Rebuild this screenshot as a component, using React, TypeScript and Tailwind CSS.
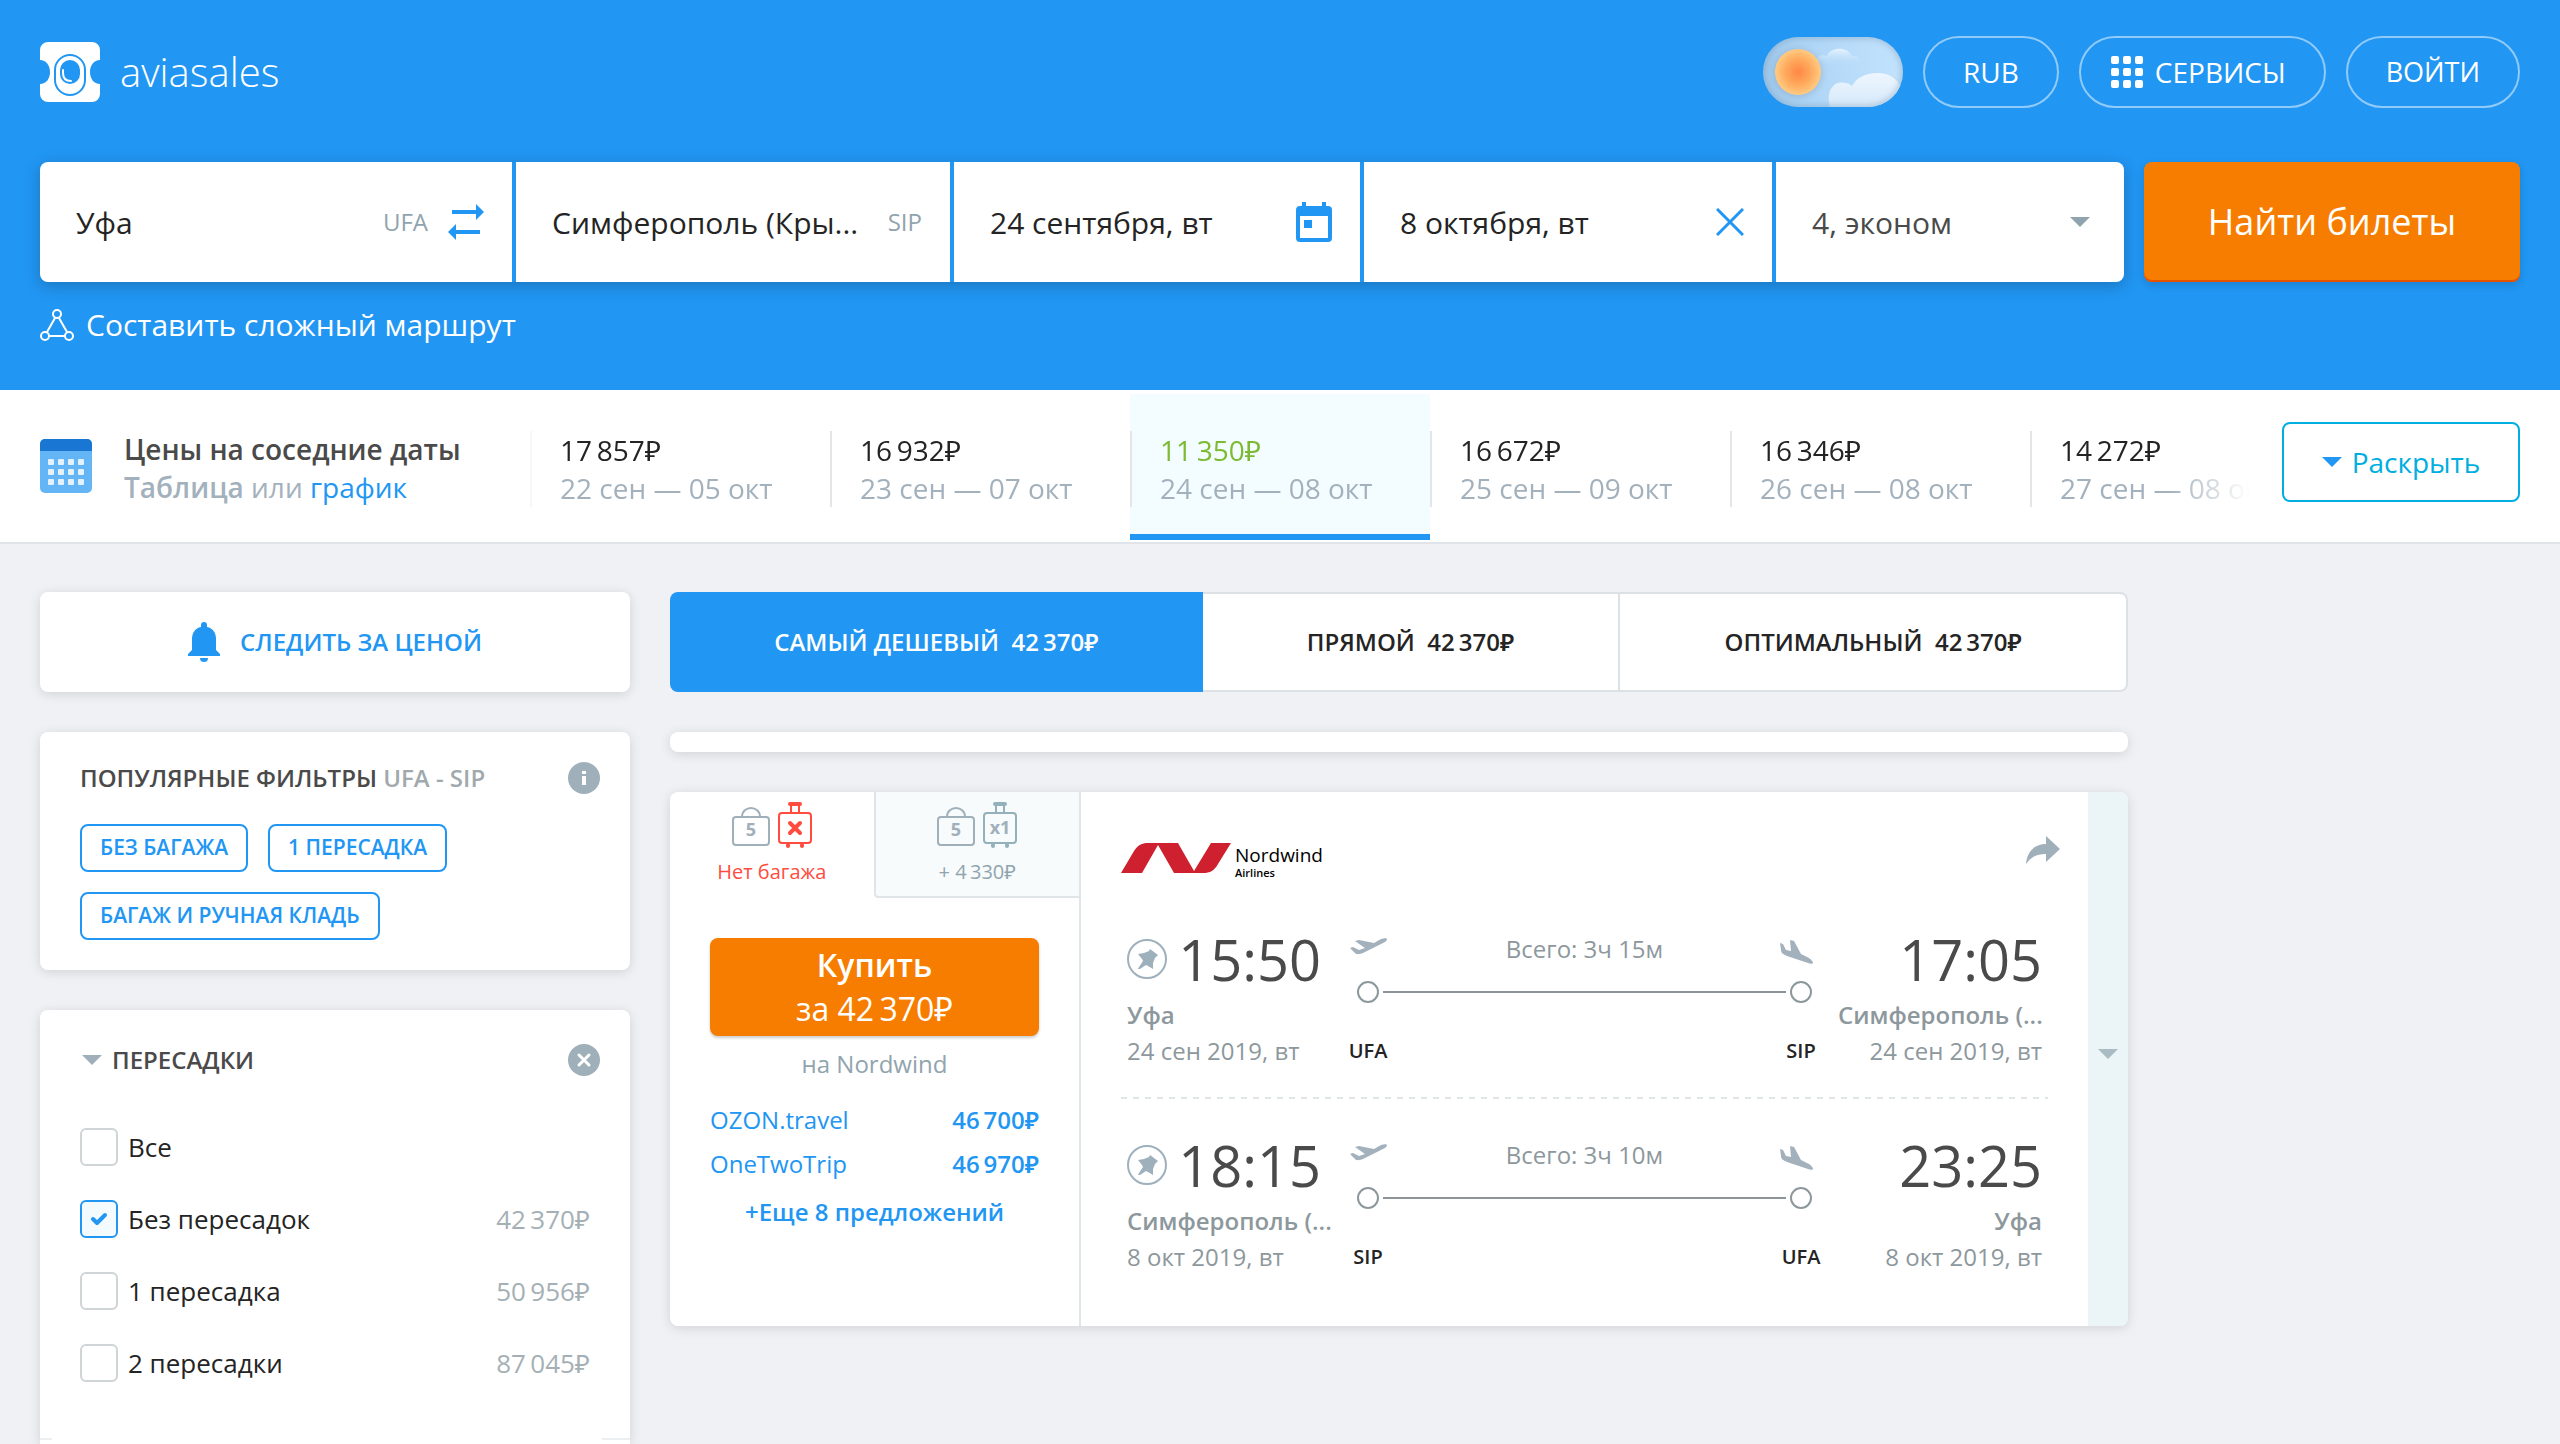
import React from "react";

type Stop = { label: string; price?: string };
type LegData = {
  depart: string;
  arrive: string;
  from: string;
  to: string;
  fromCode: string;
  toCode: string;
  date: string;
  duration: string;
};

const prices = [
  { price: "17\u2009857₽", dates: "22 сен — 05 окт" },
  { price: "16\u2009932₽", dates: "23 сен — 07 окт" },
  { price: "11\u2009350₽", dates: "24 сен — 08 окт", active: true },
  { price: "16\u2009672₽", dates: "25 сен — 09 окт" },
  { price: "16\u2009346₽", dates: "26 сен — 08 окт" },
  { price: "14\u2009272₽", dates: "27 сен — 08 окт" },
];

const stops: Stop[] = [
  { label: "Все" },
  { label: "Без пересадок", price: "42\u2009370₽" },
  { label: "1 пересадка", price: "50\u2009956₽" },
  { label: "2 пересадки", price: "87\u2009045₽" },
];

const legs: LegData[] = [
  {
    depart: "15:50",
    arrive: "17:05",
    from: "Уфа",
    to: "Симферополь (...",
    fromCode: "UFA",
    toCode: "SIP",
    date: "24 сен 2019, вт",
    duration: "Всего: 3ч 15м",
  },
  {
    depart: "18:15",
    arrive: "23:25",
    from: "Симферополь (...",
    to: "Уфа",
    fromCode: "SIP",
    toCode: "UFA",
    date: "8 окт 2019, вт",
    duration: "Всего: 3ч 10м",
  },
];

const card = "bg-white rounded-lg shadow-[0_2px_12px_rgba(0,0,0,0.13)]";

const Triangle: React.FC<{ className?: string }> = ({ className }) => (
  <svg className={className} width="20" height="10" viewBox="0 0 20 10" fill="currentColor">
    <path d="M0 0h20L10 10z" />
  </svg>
);

const Logo = () => (
  <svg width="60" height="60" viewBox="0 0 60 60">
    <path
      d="M8 0h44a8 8 0 0 1 8 8v10c-6 0-10 5-10 12s4 12 10 12v10a8 8 0 0 1-8 8H8a8 8 0 0 1-8-8V42c6 0 10-5 10-12S6 18 0 18V8a8 8 0 0 1 8-8z"
      fill="#fff"
    />
    <rect x="15" y="13" width="30" height="40" rx="15" fill="none" stroke="#2196f3" strokeWidth="2" />
    <rect x="20" y="18" width="20" height="24" rx="10" fill="#2196f3" />
    <path d="M23 28v3c0 5 3 8 8 8" fill="none" stroke="#fff" strokeWidth="2" strokeLinecap="round" />
  </svg>
);

const DayToggle = () => (
  <svg width="140" height="70" viewBox="0 0 140 70">
    <defs>
      <radialGradient id="sun">
        <stop offset="0" stopColor="#ff8744" />
        <stop offset="0.55" stopColor="#ffa95c" />
        <stop offset="1" stopColor="#ffcb82" />
      </radialGradient>
      <linearGradient id="sky" x1="0" y1="0" x2="1" y2="0">
        <stop offset="0" stopColor="#9fc9ec" />
        <stop offset="0.35" stopColor="#b0d6f6" />
        <stop offset="1" stopColor="#c3e3fd" />
      </linearGradient>
      <linearGradient id="cloud" x1="0" y1="0" x2="0" y2="1">
        <stop offset="0" stopColor="#eef6fe" />
        <stop offset="1" stopColor="#d2e7fa" />
      </linearGradient>
      <linearGradient id="haze" x1="0" y1="0" x2="0" y2="1">
        <stop offset="0" stopColor="#e6f3fe" />
        <stop offset="1" stopColor="#bbddf9" stopOpacity="0" />
      </linearGradient>
      <clipPath id="pill">
        <rect width="140" height="70" rx="35" />
      </clipPath>
      <filter id="soft">
        <feGaussianBlur stdDeviation="3" />
      </filter>
    </defs>
    <g clipPath="url(#pill)">
      <rect width="140" height="70" fill="url(#sky)" />
      <path d="M51 28c0-6 6-12 13-9 2-8 20-11 25 0 6-2 10 5 9 10H51z" fill="url(#haze)" />
      <path d="M67 70c-4-12 1-27 15-24 3 0 5 1 7 3 4-8 14-13 25-13 14 0 22 7 25 18v20H67z" fill="url(#cloud)" />
      <rect x="-1" y="-1" width="142" height="72" rx="36" fill="none" stroke="#6f8fac" strokeOpacity="0.6" strokeWidth="4" filter="url(#soft)" />
      <circle cx="35" cy="36" r="24" fill="#7b8fa5" opacity="0.35" filter="url(#soft)" />
      <circle cx="35" cy="35" r="23" fill="url(#sun)" />
    </g>
  </svg>
);

const SwapIcon = () => (
  <svg width="36" height="36" viewBox="0 0 36 36" fill="#2196f3">
    <path d="M4 6h24V0l8 8-8 8v-6H4zM32 26H8v-6l-8 8 8 8v-6h24z" />
  </svg>
);

const DateIcon = () => (
  <svg width="36" height="40" viewBox="0 0 36 40" fill="#2196f3">
    <path fillRule="evenodd" d="M6 0h4v4h16V0h4v4h2a4 4 0 0 1 4 4v28a4 4 0 0 1-4 4H4a4 4 0 0 1-4-4V8a4 4 0 0 1 4-4h2zM4 14v22h28V14z" />
    <path d="M8 18h8v8H8z" />
  </svg>
);

const CloseIcon = () => (
  <svg width="28" height="28" viewBox="0 0 28 28" stroke="#2196f3" strokeWidth="3">
    <path d="M1 1l26 26M27 1L1 27" />
  </svg>
);

const RouteIcon = () => (
  <svg width="34" height="34" viewBox="0 0 34 34" fill="none" stroke="#fff" strokeWidth="2">
    <circle cx="17" cy="6" r="4" />
    <circle cx="5" cy="28" r="4" />
    <circle cx="29" cy="28" r="4" />
    <path d="M15 10L7 24M19 10l8 14M9 28h16" />
  </svg>
);

const GridIcon = () => (
  <svg width="32" height="32" viewBox="0 0 32 32" fill="#fff">
    {[0, 12, 24].map((y) =>
      [0, 12, 24].map((x) => <rect key={`${x}-${y}`} x={x} y={y} width="8" height="8" rx="2" />)
    )}
  </svg>
);

const CalendarIcon = () => (
  <svg width="52" height="54" viewBox="0 0 52 54">
    <rect width="52" height="54" rx="5" fill="#64b5f6" />
    <path d="M5 0h42a5 5 0 0 1 5 5v7H0V5a5 5 0 0 1 5-5z" fill="#1976d2" />
    {[20, 30, 40].map((y) =>
      [8, 18, 28, 38].map((x) => (
        <rect key={`${x}-${y}`} x={x} y={y} width="6" height="6" rx="1" fill="#e3f2fd" />
      ))
    )}
  </svg>
);

const BellIcon = () => (
  <svg width="32" height="40" viewBox="0 0 32 40" fill="#2196f3">
    <path d="M16 0c2 0 3 1 3 3v2c6 1 9 6 9 12v11l4 4v2H0v-2l4-4V17C4 11 7 6 13 5V3c0-2 1-3 3-3zM12 36h8c0 3-2 4-4 4s-4-1-4-4z" />
  </svg>
);

const BagIcon = () => (
  <svg width="38" height="46" viewBox="0 0 38 46" fill="none" stroke="#9fb0ba" strokeWidth="2">
    <rect x="1" y="15" width="36" height="28" rx="3" />
    <path d="M10 15c0-12 18-12 18 0" />
    <text x="19" y="34" textAnchor="middle" fill="#9fb0ba" stroke="none" fontSize="18" fontWeight="700">
      5
    </text>
  </svg>
);

const SuitcaseIcon: React.FC<{ none?: boolean }> = ({ none }) => (
  <svg
    className={none ? "text-[#ff4c3f]" : "text-[#94b0ba]"}
    width="34"
    height="46"
    viewBox="0 0 34 46"
    fill="none"
    stroke="currentColor"
    strokeWidth="2"
  >
    <rect x="1" y="11" width="32" height="30" rx="3" />
    <path d="M13 11V3M21 11V3" />
    <path d="M12 2h10M10 43v1M24 43v1" strokeWidth="4" strokeLinecap="round" />
    {none ? (
      <path d="M12 21l10 10M22 21L12 31" strokeWidth="4" strokeLinecap="round" />
    ) : (
      <text x="17" y="32" textAnchor="middle" fill="#9fb0ba" stroke="none" fontSize="18" fontWeight="700">
        x1
      </text>
    )}
  </svg>
);

const NordwindMark = () => (
  <svg width="110" height="30" viewBox="0 0 110 30" fill="#ce202e">
    <path d="M0 30L13 8C17 2 21 0 27 0h30l16 28L90 0h20L97 21c-4 7-8 9-15 9H53L37 2 21 30z" />
  </svg>
);

const PinIcon = () => (
  <svg width="40" height="40" viewBox="0 0 40 40">
    <circle cx="20" cy="20" r="19" fill="none" stroke="#9fb0bd" strokeWidth="2" />
    <path d="M23 10l8 6-2 2-1 1-2 5 0 6-5-3-2-1-6 4-2 0 1-2 4-6-1-2-4-5 6-1 5-2z" fill="#9fb0bd" />
  </svg>
);

const TakeoffIcon = () => (
  <svg width="44" height="32" viewBox="0 0 44 32" fill="#a3b1bd">
    <path d="M4 15l3-1 6 3 6-2-10-7 4-1 15 3 7-4c3-1 6-1 6 0s-1 3-4 4L17 20c-3 1-6 2-8 0z" />
  </svg>
);

const LandingIcon = () => (
  <svg width="44" height="32" viewBox="0 0 44 32" fill="#a3b1bd">
    <path d="M1 10l3 1 3 6 5 1-1-11 4 1 7 13 8 4c3 2 4 4 4 5s-3 1-5 0L8 23c-4-2-6-3-6-6z" />
  </svg>
);

const ShareIcon = () => (
  <svg width="34" height="28" viewBox="0 0 34 28" fill="#a0b0bb">
    <path d="M20 0l14 13-14 13v-8C10 18 5 21 0 28 1 16 8 8 20 8z" />
  </svg>
);

const Header = () => (
  <header className="bg-[#2196f3] px-10 pt-9 pb-11 text-white">
    <div className="flex items-center gap-5">
      <a href="#" className="mr-auto flex items-center gap-5 text-[40px] leading-[60px] font-light">
        <Logo />
        aviasales
      </a>
      <button aria-label="Тема">
        <DayToggle />
      </button>
      <button className="h-[72px] rounded-full border-2 border-white/50 px-[38px] text-[28px]">RUB</button>
      <button className="flex h-[72px] items-center gap-3 rounded-full border-2 border-white/50 pr-[38px] pl-[30px] text-[28px]">
        <GridIcon />
        СЕРВИСЫ
      </button>
      <button className="h-[72px] rounded-full border-2 border-white/50 px-[38px] text-[27px]">ВОЙТИ</button>
    </div>

    <form className="mt-[54px] flex gap-5" onSubmit={(e) => e.preventDefault()}>
      <div className="grid h-[120px] flex-1 grid-cols-[472fr_434fr_406fr_408fr_348fr] gap-1 overflow-hidden rounded-lg text-[30px] text-[#242424] shadow-[0_4px_16px_rgba(0,0,0,0.22)]">
        <div className="flex items-center bg-white pr-7 pl-9">
          <input aria-label="Город вылета" defaultValue="Уфа" className="w-0 min-w-0 flex-1 outline-none" />
          <span className="mr-5 text-2xl text-[#90a4ae]">UFA</span>
          <button type="button" aria-label="Поменять местами">
            <SwapIcon />
          </button>
        </div>
        <div className="flex items-center bg-white pr-7 pl-9">
          <input
            aria-label="Город прибытия"
            defaultValue="Симферополь (Кры..."
            className="w-0 min-w-0 flex-1 outline-none"
          />
          <span className="text-2xl text-[#90a4ae]">SIP</span>
        </div>
        <div className="flex items-center bg-white pr-7 pl-9">
          <input aria-label="Туда" defaultValue="24 сентября, вт" className="w-0 min-w-0 flex-1 outline-none" />
          <DateIcon />
        </div>
        <div className="flex items-center bg-white pr-7 pl-9">
          <input aria-label="Обратно" defaultValue="8 октября, вт" className="w-0 min-w-0 flex-1 outline-none" />
          <button type="button" aria-label="Очистить">
            <CloseIcon />
          </button>
        </div>
        <div className="flex items-center bg-white pr-[34px] pl-9 text-[#4a4a4a]">
          <select aria-label="Пассажиры" className="w-0 min-w-0 flex-1 appearance-none outline-none">
            <option>4, эконом</option>
          </select>
          <Triangle className="text-[#90a4ae]" />
        </div>
      </div>
      <button className="w-[376px] rounded-lg bg-[#f77d00] text-4xl font-medium shadow-[inset_0_-2px_0_#e65100,0_3px_8px_rgba(0,0,0,0.15)]">
        Найти билеты
      </button>
    </form>

    <a href="#" className="mt-[22px] flex w-fit items-center gap-3 text-[30px] leading-[42px] font-medium">
      <RouteIcon />
      Составить сложный маршрут
    </a>
  </header>
);

const PriceStrip = () => (
  <section className="flex items-center border-b-2 border-[#e0e4e8] bg-white px-10">
    <CalendarIcon />
    <div className="ml-8 w-[391px] pt-1 text-[28px] leading-[38px]">
      <p className="font-semibold text-[#4a4a4a]">Цены на соседние даты</p>
      <p className="text-[#a3b1bd]">
        <b className="font-semibold">Таблица</b> или{" "}
        <a href="#" className="text-[#2196f3]">
          график
        </a>
      </p>
    </div>
    <div className="flex h-[152px] min-w-0 flex-1 overflow-hidden pt-1 pb-0.5 pl-[15px] [mask-image:linear-gradient(to_right,transparent,black_50px,black_calc(100%-80px),transparent)]">
      {prices.map((p) => (
        <button
          key={p.dates}
          className={
            p.active
              ? "w-[300px] shrink-0 border-b-6 border-[#2196f3] bg-[#f3fdff] pt-2.5 text-left"
              : "w-[300px] shrink-0 border-b-6 border-transparent pt-2.5 text-left"
          }
        >
          <div className="border-l-2 border-[#e2e6e8] pl-7 text-[28px] leading-[38px]">
            <p className={p.active ? "text-[#7cba32]" : "text-[#242424]"}>{p.price}</p>
            <p className="whitespace-nowrap text-[#a3b1bd]">{p.dates}</p>
          </div>
        </button>
      ))}
    </div>
    <button className="mb-2 ml-8 flex h-20 w-[238px] items-center justify-center gap-2.5 rounded-lg border-2 border-[#00aee0] text-[28px] text-[#00aee0]">
      <Triangle className="text-[#2196f3]" />
      Раскрыть
    </button>
  </section>
);

const Sidebar = () => (
  <aside className="flex w-[590px] shrink-0 flex-col gap-10">
    <button className={`${card} flex h-[100px] items-center justify-center gap-5 text-2xl font-semibold text-[#2196f3]`}>
      <BellIcon />
      СЛЕДИТЬ ЗА ЦЕНОЙ
    </button>

    <section className={`${card} px-10 pt-[30px] pb-[30px]`}>
      <div className="-mr-2.5 flex items-center justify-between">
        <h2 className="text-2xl font-semibold text-[#4a4a4a]">
          ПОПУЛЯРНЫЕ ФИЛЬТРЫ <span className="text-[#9fa9ae]">UFA - SIP</span>
        </h2>
        <button aria-label="Справка">
          <svg width="32" height="32" viewBox="0 0 32 32">
            <circle cx="16" cy="16" r="16" fill="#a0b0bb" />
            <path d="M14 9h4v3h-4zM14 14h4v9h-4z" fill="#fff" />
          </svg>
        </button>
      </div>
      <div className="mt-[30px] flex flex-wrap gap-5 text-[21px] font-semibold text-[#2196f3]">
        <button className="h-12 rounded-lg border-2 border-[#2196f3] px-[18px]">БЕЗ БАГАЖА</button>
        <button className="h-12 rounded-lg border-2 border-[#2196f3] px-[18px]">1 ПЕРЕСАДКА</button>
        <button className="h-12 rounded-lg border-2 border-[#2196f3] px-[18px]">БАГАЖ И РУЧНАЯ КЛАДЬ</button>
      </div>
    </section>

    <section className="flex flex-1 flex-col rounded-t-lg bg-white pt-[34px] shadow-[0_2px_12px_rgba(0,0,0,0.13)]">
      <div className="flex items-center pr-[30px] pl-[42px]">
        <button className="flex items-center gap-2.5 text-2xl font-semibold text-[#4a4a4a]">
          <Triangle className="text-[#a0b0bb]" />
          ПЕРЕСАДКИ
        </button>
        <button aria-label="Сбросить" className="ml-auto">
          <svg width="32" height="32" viewBox="0 0 32 32">
            <circle cx="16" cy="16" r="16" fill="#a0b0bb" />
            <path d="M11 11l10 10M21 11L11 21" stroke="#fff" strokeWidth="3" strokeLinecap="round" />
          </svg>
        </button>
      </div>
      <div className="mt-[52px] flex flex-col gap-[34px] px-10 text-[26px] leading-[38px]">
        {stops.map((s, i) => (
          <label key={s.label} className="flex items-center gap-2.5 text-[#242424]">
            <span className="grid">
              <input
                type="checkbox"
                defaultChecked={i === 1}
                className="peer col-start-1 row-start-1 size-[38px] appearance-none rounded-md border-2 border-[#cfd4d6] checked:border-[#2196f3] checked:bg-[#f3fbff]"
              />
              <svg
                className="pointer-events-none invisible col-start-1 row-start-1 peer-checked:visible"
                width="38"
                height="38"
                viewBox="0 0 38 38"
              >
                <path d="M13 19l4 4 8-8" fill="none" stroke="#2196f3" strokeWidth="4" strokeLinecap="round" strokeLinejoin="round" />
              </svg>
            </span>
            {s.label}
            <span className="ml-auto text-[#a5b0b5]">{s.price}</span>
          </label>
        ))}
      </div>
      <div className="mt-14 flex justify-between pb-1">
        <span className="h-0.5 w-3 bg-[#eceff1]" />
        <span className="h-0.5 w-7 bg-[#eceff1]" />
      </div>
    </section>
  </aside>
);

const Leg: React.FC<{ leg: LegData }> = ({ leg }) => (
  <div className="flex gap-[15px] px-1.5 text-2xl leading-9 text-[#8d989d]">
    <div className="w-[204px] shrink-0 whitespace-nowrap">
      <div className="flex items-center justify-between text-[56px] leading-[60px] text-[#4a4a4a]">
        <button aria-label="Закрепить">
          <PinIcon />
        </button>
        <span className="pr-2.5">{leg.depart}</span>
      </div>
      <p className="mt-2 font-semibold">{leg.from}</p>
      <p>{leg.date}</p>
    </div>
    <div className="flex flex-1 flex-col pt-1">
      <div className="flex justify-between text-2xl leading-8">
        <TakeoffIcon />
        {leg.duration}
        <LandingIcon />
      </div>
      <div className="mt-4 flex items-center gap-1 px-[11px]">
        <span className="size-[22px] rounded-full border-2 border-[#8d989d]" />
        <span className="h-0.5 flex-1 bg-[#8d9499]" />
        <span className="size-[22px] rounded-full border-2 border-[#8d989d]" />
      </div>
      <div className="mt-[30px] flex justify-between text-center text-xl leading-9 font-semibold text-[#242424]">
        <span className="w-11">{leg.fromCode}</span>
        <span className="w-11">{leg.toCode}</span>
      </div>
    </div>
    <div className="w-[204px] shrink-0 text-right whitespace-nowrap">
      <p className="text-[56px] leading-[60px] text-[#4a4a4a]">{leg.arrive}</p>
      <p className="mt-2 font-semibold">{leg.to}</p>
      <p>{leg.date}</p>
    </div>
  </div>
);

const Ticket = () => (
  <article className={`${card} flex overflow-hidden`}>
    <div className="w-[411px] shrink-0 border-r-2 border-[#e0e5e8]">
      <div className="flex text-xl leading-7">
        <button className="flex h-[106px] flex-1 flex-col items-center pt-2.5 text-[#ff4c3f]">
          <span className="flex gap-2">
            <BagIcon />
            <SuitcaseIcon none />
          </span>
          <span className="mt-2.5">Нет багажа</span>
        </button>
        <button className="flex h-[106px] flex-1 flex-col items-center rounded-bl-sm border-b-2 border-l-2 border-[#e0e5e8] bg-[#f7fbfc] pt-2.5 text-[#90a4ae]">
          <span className="flex gap-2">
            <BagIcon />
            <SuitcaseIcon />
          </span>
          <span className="mt-2.5">+ 4&#8201;330₽</span>
        </button>
      </div>
      <div className="px-10 pt-10 text-center text-2xl leading-8">
        <button className="h-[98px] w-full rounded-lg bg-[#f77d00] text-[32px] leading-11 text-white shadow-[0_2px_3px_rgba(0,0,0,0.2)]">
          <span className="block font-semibold">Купить</span>
          <span className="block">за 42&#8201;370₽</span>
        </button>
        <p className="mt-3 text-[#90a4ae]">на Nordwind</p>
        <a href="#" className="mt-6 flex justify-between text-[#2196f3]">
          OZON.travel <span className="font-semibold">46&#8201;700₽</span>
        </a>
        <a href="#" className="mt-3 flex justify-between text-[#2196f3]">
          OneTwoTrip <span className="font-semibold">46&#8201;970₽</span>
        </a>
        <a href="#" className="mt-4 block font-semibold text-[#2196f3]">
          +Еще 8 предложений
        </a>
      </div>
    </div>

    <div className="flex-1 px-10 pb-[51px]">
      <div className="-mr-3 flex h-[137px] justify-between pt-11">
        <div className="flex gap-1 pt-[7px] text-black">
          <NordwindMark />
          <div>
            <p className="text-[19px] leading-6">Nordwind</p>
            <p className="text-[11px] leading-3 font-semibold">Airlines</p>
          </div>
        </div>
        <button aria-label="Поделиться" className="self-start">
          <ShareIcon />
        </button>
      </div>
      <Leg leg={legs[0]} />
      <div className="mt-7 mb-9 h-0.5 bg-[repeating-linear-gradient(to_right,#e0e5e8_0_6px,transparent_6px_12px)]" />
      <Leg leg={legs[1]} />
    </div>

    <button
      aria-label="Подробнее"
      className="flex w-10 shrink-0 items-center justify-center bg-[#ebf4f7] pb-2.5 text-[#a9bcc3]"
    >
      <Triangle />
    </button>
  </article>
);

const App: React.FC = () => {
  return (
    <div className="flex min-h-screen flex-col bg-[#eff1f5] font-['Open_Sans','Noto_Sans',sans-serif]">
      <Header />
      <PriceStrip />
      <main className="flex flex-1 gap-10 px-10 pt-12">
        <Sidebar />
        <div className="flex max-w-[1458px] min-w-0 flex-1 flex-col gap-10">
          <div className="flex h-[100px] text-2xl font-semibold whitespace-pre text-[#242424]">
            <button className="flex-auto rounded-l-lg bg-[#2196f3] text-white">{"САМЫЙ ДЕШЕВЫЙ  42\u2009370₽"}</button>
            <button className="flex-auto border-2 border-l-0 border-[#dce1e5] bg-white">{"ПРЯМОЙ  42\u2009370₽"}</button>
            <button className="flex-auto rounded-r-lg border-2 border-l-0 border-[#dce1e5] bg-white">
              {"ОПТИМАЛЬНЫЙ  42\u2009370₽"}
            </button>
          </div>
          <div className={`${card} h-5 shrink-0`} />
          <Ticket />
        </div>
      </main>
    </div>
  );
};

export default App;
